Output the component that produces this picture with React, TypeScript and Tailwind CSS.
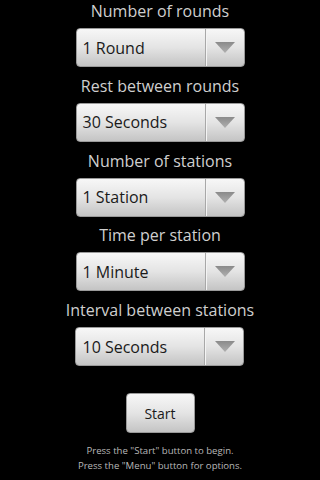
const groups = [
  { label: "Number of rounds", value: "1 Round" },
  { label: "Rest between rounds", value: "30 Seconds" },
  { label: "Number of stations", value: "1 Station" },
  { label: "Time per station", value: "1 Minute" },
  { label: "Interval between stations", value: "10 Seconds" },
];

const Spinner = ({ value }: { value: string }) => (
  <div className="flex h-[39px] w-[169px] items-stretch rounded-[4px] border border-[#9a9a9a] bg-gradient-to-b from-[#f7f7f7] via-[#e4e4e4] to-[#c4c4c4]">
    <div className="flex flex-1 items-center pl-[6px] text-[16px] text-[#1a1a1a]">{value}</div>
    <div className="w-px bg-[#a8a8a8]" />
    <div className="w-px bg-[#f4f4f4]" />
    <div className="flex w-[37px] items-center justify-center">
      <svg width="20" height="11" viewBox="0 0 20 11">
        <defs>
          <linearGradient id="arr" x1="0" y1="0" x2="0" y2="1">
            <stop offset="0" stopColor="#8a8a8a" />
            <stop offset="1" stopColor="#b0b0b0" />
          </linearGradient>
        </defs>
        <path d="M0 0 H20 L10 11 Z" fill="url(#arr)" />
      </svg>
    </div>
  </div>
);

export default function App() {
  return (
    <div
      className="flex h-[480px] w-[320px] flex-col items-center bg-black"
      style={{ fontFamily: '"Open Sans", "Noto Sans", sans-serif' }}
    >
      {groups.map((g) => (
        <div key={g.label} className="flex flex-col items-center pb-[7.75px]">
          <div className="h-[22px] text-[16px] leading-[22px] text-[#cfcfcf]">{g.label}</div>
          <div className="mt-[6px]">
            <Spinner value={g.value} />
          </div>
        </div>
      ))}
      <button className="mt-[19.5px] h-[40px] w-[69px] rounded-[4px] border border-[#9a9a9a] bg-gradient-to-b from-[#f7f7f7] via-[#e4e4e4] to-[#c4c4c4] text-[14px] text-[#1a1a1a]">
        Start
      </button>
      <div className="mt-[10px] text-center text-[9.6px] leading-[15px] text-[#b8b8b8]">
        <div>Press the "Start" button to begin.</div>
        <div>Press the "Menu" button for options.</div>
      </div>
    </div>
  );
}
